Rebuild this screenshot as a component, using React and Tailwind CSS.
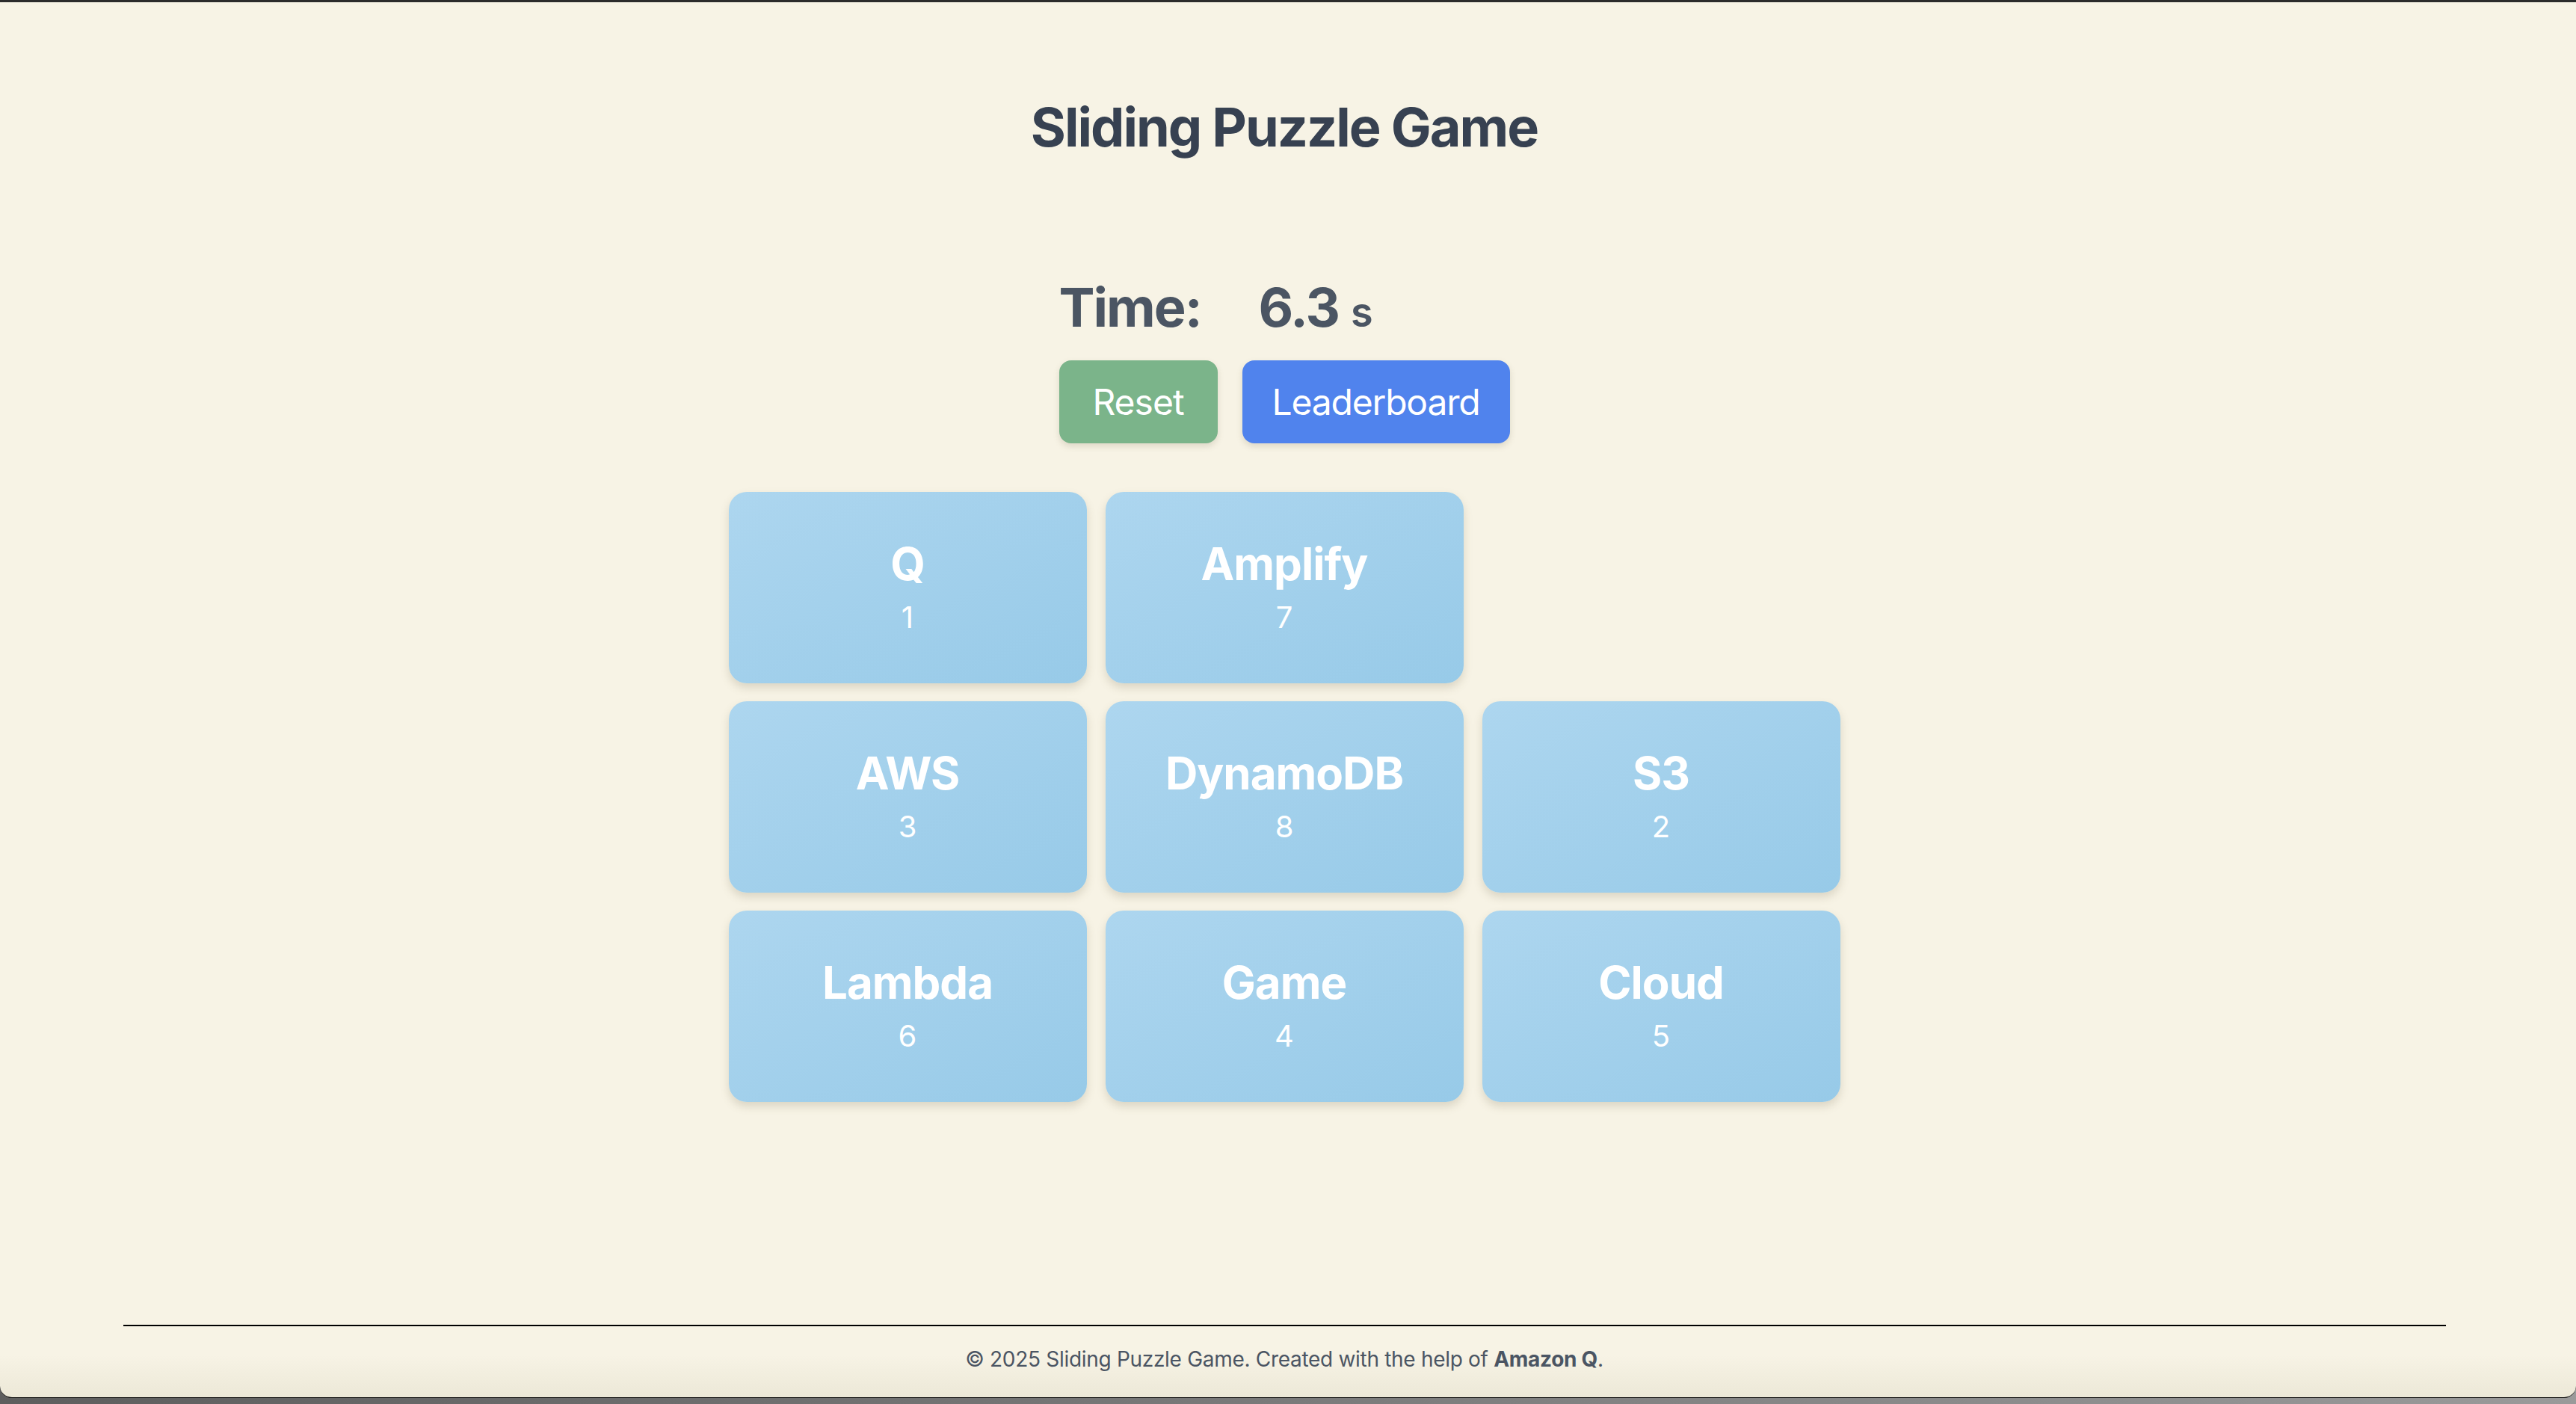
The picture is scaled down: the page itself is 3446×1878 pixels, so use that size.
import React, { useState } from 'react';

const TILES = [
  { name: 'Q', num: 1 },
  { name: 'Amplify', num: 7 },
  null,
  { name: 'AWS', num: 3 },
  { name: 'DynamoDB', num: 8 },
  { name: 'S3', num: 2 },
  { name: 'Lambda', num: 6 },
  { name: 'Game', num: 4 },
  { name: 'Cloud', num: 5 },
];

const Tile = ({ tile }) => {
  if (!tile) return <div className="w-[479px] h-[256px]" />;
  return (
    <button className="w-[479px] h-[256px] rounded-[24px] bg-gradient-to-br from-[#add6ef] to-[#97cae8] shadow-[0_6px_12px_rgba(120,110,80,0.22)] flex flex-col items-center justify-center text-white">
      <span className="text-[60px] leading-[72px] font-bold tracking-[-1px]">{tile.name}</span>
      <span className="mt-[8px] text-[40px] leading-[56px] font-normal">{tile.num}</span>
    </button>
  );
};

const App = () => {
  const [tiles] = useState(TILES);

  return (
    <div className="w-full h-[1878px] bg-gradient-to-r from-[#5e5e5e] via-[#7a7a7a] to-[#9a9a9a] font-['Inter',sans-serif] overflow-hidden">
      <div className="h-[1870px] border-t-[3px] border-b border-t-[#2b2b2b] border-b-black rounded-b-[16px] bg-[linear-gradient(to_bottom,#f7f3e5_97%,#ece8d7)] overflow-hidden">
        <div className="w-[3436px] flex flex-col items-center">
          <h1 className="mt-[127px] text-[72px] leading-[80px] font-bold tracking-[-2px] text-[#374151]">
            Sliding Puzzle Game
          </h1>

          <div className="mt-[161px] flex flex-col items-start">
            {/* timer */}
            <div className="flex items-baseline h-[80px] text-[#4b5563] font-bold tracking-[-2px]">
              <span className="w-[267px] text-[72px] leading-[80px]">Time:</span>
              <span className="text-[72px] leading-[80px]">6.3</span>
              <span className="ml-[16px] text-[54px] leading-[80px] font-semibold tracking-normal">s</span>
            </div>

            <div className="mt-[31px] flex gap-[33px]">
              <button className="w-[212px] h-[111px] rounded-[16px] bg-[#7bb48a] text-white text-[48px] tracking-[-1px] shadow-[0_4px_8px_rgba(120,110,80,0.2)]">
                Reset
              </button>
              <button className="w-[358px] h-[111px] rounded-[16px] bg-[#5083ed] text-white text-[48px] tracking-[-1.2px] shadow-[0_4px_8px_rgba(120,110,80,0.2)]">
                Leaderboard
              </button>
            </div>
          </div>

          <div className="mt-[65px] grid grid-cols-[repeat(3,479px)] gap-x-[25px] gap-y-[24px]">
            {tiles.map((t, i) => (
              <Tile key={i} tile={t} />
            ))}
          </div>

          {/* footer */}
          <div className="mt-[298px] w-[3107px] h-[2px] bg-black" />
          <p className="mt-[24px] text-[28px] leading-[40px] tracking-[-0.3px] text-[#4b5563]">
            © 2025 Sliding Puzzle Game. Created with the help of <span className="font-bold">Amazon Q</span>.
          </p>
        </div>
      </div>
    </div>
  );
};

export default App;
